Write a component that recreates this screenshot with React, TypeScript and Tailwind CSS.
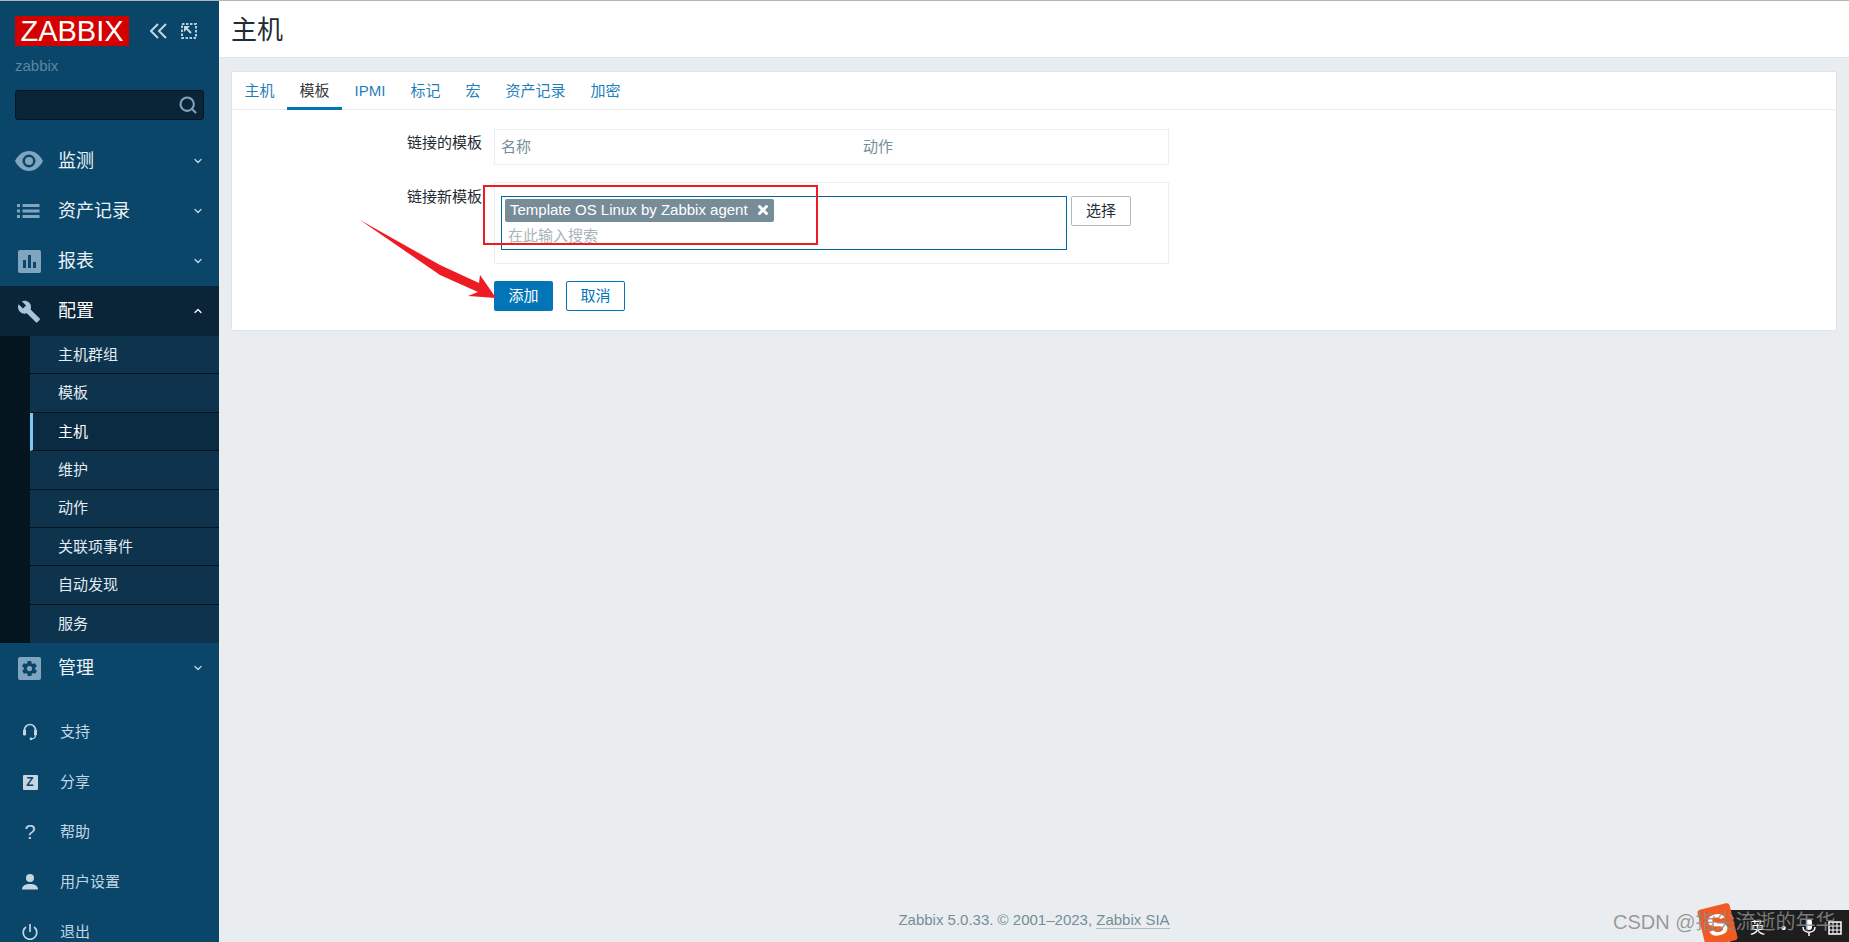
import { ChevronDown, ChevronUp, Search, X } from "lucide-react";
import type { ReactNode } from "react";

const font = { fontFamily: '"Liberation Sans", Arial, "Noto Sans CJK SC", sans-serif' };

const subItems = ["主机群组", "模板", "主机", "维护", "动作", "关联项事件", "自动发现", "服务"];
const tabs = ["主机", "模板", "IPMI", "标记", "宏", "资产记录", "加密"];

const EyeIcon = () => (
  <svg width="28" height="20" viewBox="0 0 28 20" fill="#7fa5bf">
    <path fillRule="evenodd" d="M14 0C8 0 3 4 0 10c3 6 8 10 14 10s11-4 14-10C25 4 20 0 14 0zm0 3.500a6.500 6.500 0 1 1 0 13 6.500 6.500 0 0 1 0-13z" />
    <circle cx="14" cy="10" r="4" />
  </svg>
);

const ListIcon = () => (
  <svg width="24" height="14" viewBox="0 0 24 14" fill="#7fa5bf">
    <rect x="0" y="0" width="3" height="3" />
    <rect x="0" y="5.500" width="3" height="3" />
    <rect x="0" y="11" width="3" height="3" />
    <rect x="5.500" y="0" width="17" height="3" />
    <rect x="5.500" y="5.500" width="17" height="3" />
    <rect x="5.500" y="11" width="17" height="3" />
  </svg>
);

const ChartIcon = () => (
  <svg width="23" height="23" viewBox="0 0 23 23">
    <rect width="23" height="23" rx="2" fill="#7fa5bf" />
    <rect x="5" y="10" width="3" height="8" fill="#0a466a" />
    <rect x="10" y="5" width="3" height="13" fill="#0a466a" />
    <rect x="15" y="12" width="3" height="6" fill="#0a466a" />
  </svg>
);

const WrenchIcon = () => (
  <svg width="24" height="24" viewBox="0 0 24 24" fill="#a5c6db">
    <path d="M22.700 19.600 13.600 10.500c.9-2.300.4-5-1.500-6.900C10.100 1.600 7.100 1.200 4.700 2.300l4.300 4.300-3 3-4.400-4.300C.4 7.700.9 10.700 2.900 12.700c1.900 1.900 4.600 2.400 6.900 1.500l9.100 9.100c.4.400 1 .4 1.400 0l2.300-2.300c.5-.4.500-1.100.1-1.400z" />
  </svg>
);

const GearIcon = () => (
  <svg width="23" height="23" viewBox="0 0 23 23">
    <rect width="23" height="23" rx="2" fill="#7fa5bf" />
    <g transform="translate(2.500 2.500) scale(.75)">
      <path fill="#0a466a" fillRule="evenodd" d="M19.400 13c.04-.3.100-.7.100-1s-.03-.7-.1-1l2.100-1.600c.2-.2.300-.4.100-.6l-2-3.500c-.1-.2-.4-.3-.6-.2l-2.500 1c-.5-.4-1.100-.7-1.700-1l-.4-2.600c0-.3-.2-.4-.5-.4h-4c-.3 0-.5.200-.5.400l-.4 2.600c-.6.300-1.200.6-1.700 1l-2.500-1c-.2-.1-.5 0-.6.200l-2 3.500c-.1.200-.1.500.1.600L4.600 11c0 .3-.1.700-.1 1s0 .7.100 1l-2.100 1.600c-.2.200-.3.400-.1.600l2 3.500c.1.200.4.300.6.200l2.500-1c.5.400 1.100.7 1.700 1l.4 2.600c0 .3.200.4.500.4h4c.3 0 .5-.2.500-.4l.4-2.600c.6-.3 1.200-.6 1.700-1l2.500 1c.2.100.5 0 .6-.2l2-3.500c.1-.2.100-.5-.1-.6L19.400 13zM12 15.500a3.500 3.500 0 1 1 0-7 3.500 3.500 0 0 1 0 7z" />
    </g>
  </svg>
);

const HeadsetIcon = () => (
  <svg width="16" height="18" viewBox="0 0 16 18" fill="none">
    <path d="M2.500 10V7a5.500 5.500 0 0 1 11 0v3" stroke="#c4d6e2" strokeWidth="1.600" />
    <rect x="1" y="6.500" width="3" height="6" rx="1.300" fill="#c4d6e2" />
    <rect x="12" y="6.500" width="3" height="6" rx="1.300" fill="#c4d6e2" />
    <path d="M13.500 12c0 2-1.500 3.800-4 3.800" stroke="#c4d6e2" strokeWidth="1.200" />
    <circle cx="9" cy="15.800" r="1.400" fill="#c4d6e2" />
  </svg>
);

const ShareIcon = () => (
  <div className="flex h-[15px] w-[15px] items-center justify-center rounded-[1px] bg-[#c4d6e2] text-[12px] font-bold leading-none text-[#0a466a]">
    Z
  </div>
);

const UserIcon = () => (
  <svg width="16" height="16" viewBox="0 0 16 16" fill="#c4d6e2">
    <circle cx="8" cy="4" r="4" />
    <path d="M0 15.500c0-4 3.500-5.500 8-5.500s8 1.500 8 5.500z" />
  </svg>
);

const PowerIcon = () => (
  <svg width="16" height="16" viewBox="0 0 16 16" fill="none" stroke="#c4d6e2" strokeWidth="1.700">
    <path d="M8 0v8" />
    <path d="M4 3a6.800 6.800 0 1 0 8 0" />
  </svg>
);

function MainItem({ icon, label, open }: { icon: ReactNode; label: string; open?: boolean }) {
  return (
    <div className={`flex h-[50px] items-center ${open ? "bg-[#0a2538]" : ""}`}>
      <div className="flex w-[58px] justify-center">{icon}</div>
      <span className={`text-[18px] ${open ? "text-white" : "text-[#eaf2f7]"}`}>{label}</span>
      <span className={`ml-auto mr-[15px] ${open ? "text-white" : "text-[#c4d6e2]"}`}>
        {open ? <ChevronUp size={12} strokeWidth={2.500} /> : <ChevronDown size={12} strokeWidth={2.500} />}
      </span>
    </div>
  );
}

function BottomItem({ icon, label }: { icon: ReactNode; label: string }) {
  return (
    <div className="flex h-[50px] shrink-0 items-center text-[#c4d6e2]">
      <div className="flex w-[60px] justify-center">{icon}</div>
      <span className="text-[15px]">{label}</span>
    </div>
  );
}

function Sidebar() {
  return (
    <aside className="flex h-[941px] w-[219px] shrink-0 flex-col overflow-hidden bg-[#0a466a]">
      <div className="flex shrink-0 items-center pl-[15px] pt-[15px]">
        <div className="flex h-[30px] w-[114px] items-center justify-center bg-[#d40000] text-[29px] font-light leading-none text-white">
          ZABBIX
        </div>
        <svg className="ml-[21px]" width="18" height="16" viewBox="0 0 18 16" fill="none" stroke="#c4d6e2" strokeWidth="2">
          <path d="M8 1 1 8l7 7" />
          <path d="M16 1 9 8l7 7" />
        </svg>
        <svg className="ml-[13px]" width="16" height="16" viewBox="0 0 16 16" fill="none" stroke="#b4cbdb">
          <path d="M1 1h14v14H1z" strokeWidth="2" strokeDasharray="2.500 1.500" />
          <path d="M3 3h6L3 9z" fill="#c4d6e2" stroke="none" />
          <path d="M5 5l5 5" stroke="#c4d6e2" strokeWidth="2" />
        </svg>
      </div>
      <div className="shrink-0 pl-[15px] pt-[11px] text-[15px] leading-[18px] text-[#5e86a1]">zabbix</div>
      <div className="mx-[15px] mt-[15px] flex h-[30px] shrink-0 items-center justify-end rounded-[3px] border border-[#04151f] bg-[#0a2538] pr-[5px]">
        <Search size={20} strokeWidth={2.500} className="text-[#7fa5bf]" />
      </div>
      <nav className="mt-[16px] shrink-0">
        <MainItem icon={<EyeIcon />} label="监测" />
        <MainItem icon={<ListIcon />} label="资产记录" />
        <MainItem icon={<ChartIcon />} label="报表" />
        <MainItem icon={<WrenchIcon />} label="配置" open />
        <div className="bg-[#04151f] pl-[30px]">
          {subItems.map((item) => (
            <div
              key={item}
              className={`flex h-[38.375px] items-center border-b border-[#04151f] pt-[1px] text-[15px] last:border-b-0 ${
                item === "主机"
                  ? "border-l-[3px] border-l-[#7dc9f5] bg-[#0a2b41] pl-[25px] text-white"
                  : "bg-[#0d334d] pl-[28px] text-[#e3ecf2]"
              }`}
            >
              {item}
            </div>
          ))}
        </div>
        <MainItem icon={<GearIcon />} label="管理" />
      </nav>
      <div className="mt-[14px] flex shrink-0 flex-col">
        <BottomItem icon={<HeadsetIcon />} label="支持" />
        <BottomItem icon={<ShareIcon />} label="分享" />
        <BottomItem icon={<span className="text-[20px] leading-none">?</span>} label="帮助" />
        <BottomItem icon={<UserIcon />} label="用户设置" />
        <BottomItem icon={<PowerIcon />} label="退出" />
      </div>
    </aside>
  );
}

function Tabs() {
  return (
    <div className="flex h-[38px] border-b border-[#ebeef0] text-[15px]">
      {tabs.map((tab) => (
        <div
          key={tab}
          className={`-mb-[1px] flex h-[38px] items-center px-[12.500px] ${
            tab === "模板" ? "border-b-[3px] border-[#0275b8] pt-[3px] text-[#3b3b3b]" : "text-[#1f7fb9]"
          }`}
        >
          {tab}
        </div>
      ))}
    </div>
  );
}

function Form() {
  return (
    <div className="pt-[19px] text-[15px]">
      <div className="flex">
        <div className="w-[262px] pr-[12px] pt-[4px] text-right leading-[20px] text-[#1f2c33]">链接的模板</div>
        <div className="flex h-[36px] w-[675px] items-center border border-[#ebeef0] pl-[6px] text-[#768d99]">
          <span className="w-[362px]">名称</span>
          <span>动作</span>
        </div>
      </div>
      <div className="mt-[17px] flex">
        <div className="w-[262px] pr-[12px] pt-[5px] text-right leading-[20px] text-[#1f2c33]">链接新模板</div>
        <div className="flex h-[82px] w-[675px] items-start border border-[#ebeef0] pl-[6px] pt-[13px]">
          <div className="h-[54px] w-[566px] border border-[#00669c] px-[3px] pt-[2px]">
            <div className="flex h-[23px] w-[269px] items-center rounded-[2px] bg-[#768d99] pl-[5px] text-white">
              Template OS Linux by Zabbix agent
              <X size={14} strokeWidth={5} className="mb-[1px] ml-[8px]" />
            </div>
            <div className="pl-[3px] pt-[4px] leading-[20px] text-[#a8b4ba]">在此输入搜索</div>
          </div>
          <button className="ml-[4px] h-[30px] w-[60px] rounded-[2px] border border-[#acbbc2] bg-white text-[#1f2c33]">选择</button>
        </div>
      </div>
      <div className="ml-[262px] mt-[17px] flex gap-[13px]">
        <button className="h-[30px] w-[59px] rounded-[2px] bg-[#0275b8] text-white">添加</button>
        <button className="h-[30px] w-[59px] rounded-[2px] border border-[#0275b8] bg-white text-[#0275b8]">取消</button>
      </div>
    </div>
  );
}

export default function App() {
  return (
    <div className="relative h-[942px] w-[1849px] overflow-hidden bg-[#e9edf0]" style={font}>
      <div className="h-[1px] bg-[#b5b5b5]" />
      <div className="flex">
        <Sidebar />
        <main className="flex h-[941px] min-w-0 flex-1 flex-col">
          <header className="flex h-[57px] shrink-0 items-center border-b border-[#dfe4e7] bg-white pl-[12px] pt-[2px] text-[26px] text-[#1f2c33]">
            主机
          </header>
          <section className="mx-[12px] mt-[13px] h-[260px] rounded-[2px] border border-[#dfe4e7] bg-white">
            <Tabs />
            <Form />
          </section>
          <footer className="mt-auto flex h-[42px] items-center justify-center pb-[2px] text-[15px] text-[#768d99]">
            <span>Zabbix 5.0.33. © 2001–2023,&nbsp;</span>
            <span className="border-b border-[#acbbc2] leading-[17px]">Zabbix SIA</span>
          </footer>
        </main>
      </div>

      {/* red annotation */}
      <div className="absolute left-[483px] top-[185px] h-[60px] w-[335px] border-2 border-[#ed1c24]" />
      <svg className="absolute left-[355px] top-[215px]" width="145" height="95" viewBox="0 0 145 95" fill="#ed1c24">
        <path d="M5 5 85 50 124 68 125 60 141 83 113 81 123 77 85 60z" />
      </svg>

      {/* input method bar + watermark */}
      <div className="absolute bottom-0 left-[1730px] flex h-[32px] w-[119px] items-center overflow-hidden bg-[#1e1e1e] pl-[20px] pt-[4px] text-[15px] text-white">
        <span>英</span>
        <span className="ml-[16px]">•</span>
        <svg className="ml-[16px] shrink-0" width="14" height="18" viewBox="0 0 14 18" fill="white">
          <rect x="4" y="0" width="6" height="11" rx="3" />
          <path d="M1 8c0 7 12 7 12 0M7 13v4" stroke="white" fill="none" strokeWidth="1.500" />
        </svg>
        <svg className="ml-[12px] shrink-0" width="14" height="14" viewBox="0 0 14 14" fill="none" stroke="white" strokeWidth="1.500">
          <rect x="1" y="1" width="12" height="12" />
          <path d="M1 5h12M1 9h12M5 1v12M9 1v12" strokeWidth="1" />
        </svg>
      </div>
      <div className="absolute left-[1701px] top-[906px] flex h-[38px] w-[33px] rotate-[-14deg] items-center justify-center rounded-[3px] bg-[#f15a22] text-[30px] font-bold leading-none text-white">
        S
      </div>
      <div className="absolute left-[1613px] top-[910px] whitespace-nowrap text-[20px] leading-[24px] text-[#8a8a8a]/85">
        CSDN @指尖流逝的年华
      </div>
    </div>
  );
}
